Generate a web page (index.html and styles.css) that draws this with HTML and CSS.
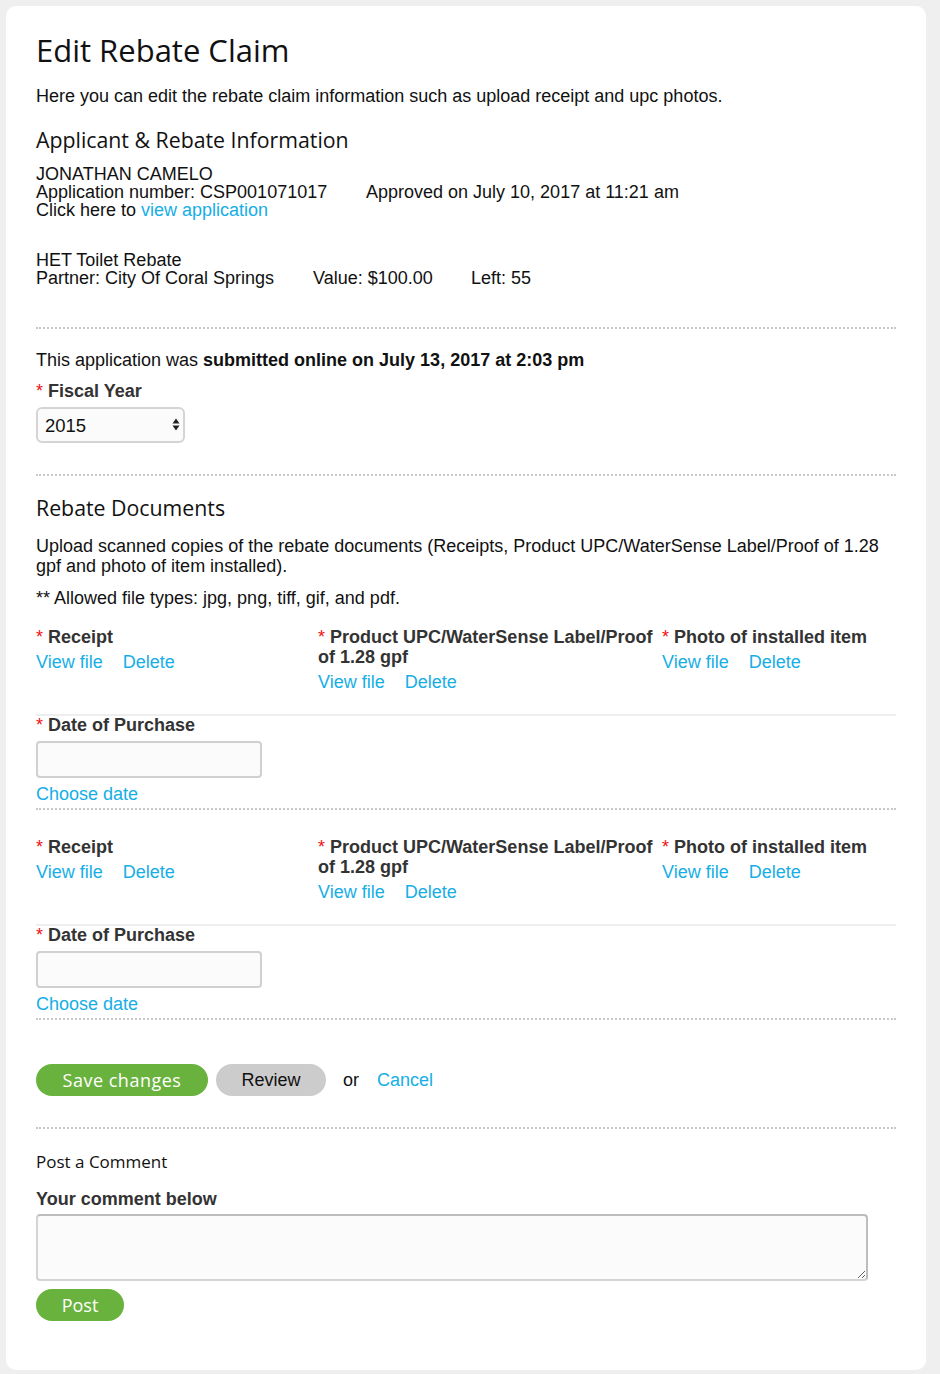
FILE: index.html
```html
<!DOCTYPE html>
<html>
<head>
<meta charset="utf-8">
<link rel="stylesheet" href="styles.css">
</head>
<body>
<div class="card">
  <h1 class="title">Edit Rebate Claim</h1>
  <p class="intro">Here you can edit the rebate claim information such as upload receipt and upc photos.</p>

  <h2 class="section">Applicant &amp; Rebate Information</h2>
  <div class="info">
    <div>JONATHAN CAMELO</div>
    <div class="row"><span class="c1">Application number: CSP001071017</span><span>Approved on July 10, 2017 at 11:21 am</span></div>
    <div>Click here to <a class="link" href="#">view application</a></div>
  </div>
  <div class="info rebate">
    <div>HET Toilet Rebate</div>
    <div class="row"><span class="c2">Partner: City Of Coral Springs</span><span class="c3">Value: $100.00</span><span>Left: 55</span></div>
  </div>

  <hr class="dots first">

  <p class="submitted">This application was <b>submitted online on July 13, 2017 at 2:03 pm</b></p>
  <div class="label fiscal"><span class="req">*</span> Fiscal Year</div>
  <div class="select-wrap">
    <select class="select"><option>2015</option></select>
    <svg class="arrows" width="8" height="13" viewBox="0 0 8 13"><path d="M4 0.5 L7.5 5.5 H0.5 Z M0.5 7.5 H7.5 L4 12.5 Z" fill="#222"/></svg>
  </div>

  <hr class="dots second">

  <h2 class="section docs">Rebate Documents</h2>
  <p class="upload">Upload scanned copies of the rebate documents (Receipts, Product UPC/WaterSense Label/Proof of 1.28 gpf and photo of item installed).</p>
  <p class="allowed">** Allowed file types: jpg, png, tiff, gif, and pdf.</p>

  <div class="doc">
    <div class="files">
      <div class="col">
        <div class="label"><span class="req">*</span> Receipt</div>
        <div class="links"><a class="link" href="#">View file</a><a class="link" href="#">Delete</a></div>
      </div>
      <div class="col">
        <div class="label"><span class="req">*</span> Product UPC/WaterSense Label/Proof of 1.28 gpf</div>
        <div class="links"><a class="link" href="#">View file</a><a class="link" href="#">Delete</a></div>
      </div>
      <div class="col">
        <div class="label"><span class="req">*</span> Photo of installed item</div>
        <div class="links"><a class="link" href="#">View file</a><a class="link" href="#">Delete</a></div>
      </div>
    </div>
    <div class="date">
      <div class="label date-label"><span class="req">*</span> Date of Purchase</div>
      <input class="input" type="text">
      <a class="link choose" href="#">Choose date</a>
    </div>
  </div>

  <div class="doc">
    <div class="files">
      <div class="col">
        <div class="label"><span class="req">*</span> Receipt</div>
        <div class="links"><a class="link" href="#">View file</a><a class="link" href="#">Delete</a></div>
      </div>
      <div class="col">
        <div class="label"><span class="req">*</span> Product UPC/WaterSense Label/Proof of 1.28 gpf</div>
        <div class="links"><a class="link" href="#">View file</a><a class="link" href="#">Delete</a></div>
      </div>
      <div class="col">
        <div class="label"><span class="req">*</span> Photo of installed item</div>
        <div class="links"><a class="link" href="#">View file</a><a class="link" href="#">Delete</a></div>
      </div>
    </div>
    <div class="date">
      <div class="label date-label"><span class="req">*</span> Date of Purchase</div>
      <input class="input" type="text">
      <a class="link choose" href="#">Choose date</a>
    </div>
  </div>

  <div class="actions">
    <button class="btn green save">Save changes</button>
    <button class="btn gray">Review</button>
    <span class="or">or</span>
    <a class="link cancel" href="#">Cancel</a>
  </div>

  <hr class="dots third">

  <div class="comment-title">Post a Comment</div>
  <div class="label comment-label">Your comment below</div>
  <textarea class="textarea"></textarea>
  <button class="btn green post">Post</button>
</div>
</body>
</html>
```
FILE: styles.css
```css
html, body {
  margin: 0;
  padding: 0;
}
body {
  background: #efefef;
  padding: 6px 14px 0 6px;
  font-family: "Liberation Sans", Arial, sans-serif;
  font-size: 18px;
  color: #111;
}
.card {
  background: #fff;
  border-radius: 10px;
  padding: 24px 30px 48px 30px;
  min-height: 1292px;
}
.title {
  font-family: "Open Sans", sans-serif;
  font-weight: 400;
  font-size: 31px;
  line-height: 40px;
  margin: 0;
  color: #111;
}
.intro {
  margin: 16px 0 0;
  line-height: 20px;
}
.section {
  font-family: "Open Sans", sans-serif;
  font-weight: 400;
  font-size: 21.3px;
  line-height: 28px;
  margin: 20px 0 0;
  color: #111;
}
.info {
  margin-top: 11px;
  line-height: 18px;
}
.info.rebate {
  margin-top: 32px;
}
.row {
  display: flex;
}
.c1 { width: 330px; }
.c2 { width: 277px; }
.c3 { width: 158px; }
.link {
  color: #15aee6;
  text-decoration: none;
}
.dots {
  border: 0;
  border-top: 2px dotted #c8c8c8;
  margin: 0;
  height: 0;
}
.dots.first { margin-top: 40px; }
.dots.second { margin-top: 31px; }
.dots.third { margin-top: 31px; }
.submitted {
  margin: 20px 0 0;
  line-height: 22px;
}
.submitted b { font-weight: 700; }
.label {
  font-weight: 700;
  color: #333;
  line-height: 20px;
}
.req {
  color: #f01010;
  font-weight: 400;
}
.fiscal {
  margin-top: 10px;
}
.select-wrap {
  position: relative;
  width: 149px;
  margin-top: 6px;
}
.select {
  appearance: none;
  -webkit-appearance: none;
  width: 149px;
  height: 36px;
  border: 2px solid #d4d4d4;
  border-radius: 6px;
  background: #fbfbfb;
  font-family: "Liberation Sans", Arial, sans-serif;
  font-size: 18.5px;
  padding: 0 0 0 7px;
  color: #111;
  display: block;
}
.arrows {
  position: absolute;
  right: 5px;
  top: 11px;
}
.docs {
  margin-top: 18px;
}
.upload {
  margin: 14px 0 0;
  line-height: 20px;
}
.allowed {
  margin: 12px 0 0;
  line-height: 20px;
}
.doc {
  border-bottom: 2px dotted #c8c8c8;
  padding-bottom: 3px;
}
.files {
  display: grid;
  grid-template-columns: 282px 344px 1fr;
  padding-top: 19px;
  padding-bottom: 22px;
  border-bottom: 2px solid #eeeeee;
}
.doc + .doc .files { padding-top: 27px; }
.links {
  display: flex;
  gap: 20px;
  line-height: 20px;
  margin-top: 5px;
}
.date-label {
  line-height: 18px;
}
.input {
  display: block;
  box-sizing: border-box;
  width: 226px;
  height: 37px;
  margin-top: 7px;
  border: 2px solid #d0d0d0;
  border-radius: 4px;
  background: #fbfbfb;
}
.choose {
  display: block;
  margin-top: 5px;
  line-height: 22px;
}
.actions {
  display: flex;
  align-items: center;
  margin-top: 44px;
}
.btn {
  border: 0;
  border-radius: 16px;
  height: 32px;
  font-size: 18px;
  cursor: pointer;
  padding: 0;
}
.green {
  background: #6ab23e;
  color: #fff;
  font-family: "Open Sans", sans-serif;
}
.save {
  width: 172px;
  letter-spacing: 0.5px;
}
.gray {
  background: #cccccc;
  color: #111;
  font-family: "Liberation Sans", Arial, sans-serif;
  width: 110px;
  margin-left: 8px;
}
.or {
  margin-left: 17px;
}
.cancel {
  margin-left: 18px;
}
.comment-title {
  font-family: "Open Sans", sans-serif;
  font-size: 17px;
  line-height: 22px;
  margin-top: 22px;
  color: #111;
}
.comment-label {
  margin-top: 16px;
}
.textarea {
  display: block;
  box-sizing: border-box;
  width: 832px;
  height: 67px;
  margin-top: 5px;
  border: 2px solid #d4d4d4;
  border-top-color: #bdbdbd;
  border-right-color: #bdbdbd;
  border-radius: 4px;
  background: #fbfbfb;
}
.post {
  margin-top: 8px;
  width: 88px;
}
```
